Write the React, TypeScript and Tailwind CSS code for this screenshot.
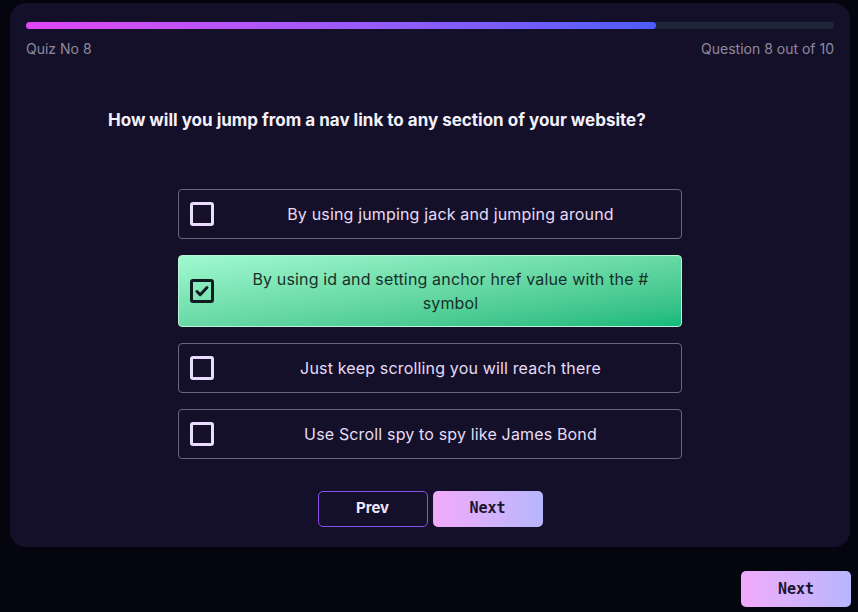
import React, { useState } from "react";

const options = [
  "By using jumping jack and jumping around",
  "By using id and setting anchor href value with the # symbol",
  "Just keep scrolling you will reach there",
  "Use Scroll spy to spy like James Bond",
];

const CheckBox: React.FC<{ checked: boolean }> = ({ checked }) => (
  <span
    className={`flex h-[24px] w-[24px] shrink-0 items-center justify-center rounded-[3px] border-[3px] ${
      checked ? "border-[#0f1d22]" : "border-[#eadcff]"
    }`}
  >
    {checked && (
      <svg viewBox="0 0 16 16" className="h-[16px] w-[16px]" fill="none">
        <path d="M3 8.5l3.2 3.2L13 4.5" stroke="#0f1d22" strokeWidth={3} strokeLinecap="round" strokeLinejoin="round" />
      </svg>
    )}
  </span>
);

export default function App() {
  const [selected, setSelected] = useState(1);

  return (
    <div className="min-h-[612px] w-[858px] bg-[#05050f] pt-[3px] font-['Inter',sans-serif]">
      <div className="ml-[10px] flex h-[544px] w-[840px] flex-col rounded-[16px] bg-[#151029] px-[16px] pt-[19px]">
        <div className="h-[7px] w-full rounded-full bg-[#1e2637]">
          <div className="h-full w-[78%] rounded-full bg-gradient-to-r from-[#e245f6] to-[#4c5cff]" />
        </div>
        <div className="mt-[9px] flex justify-between text-[14px] text-[#8e8a9c]">
          <span>Quiz No 8</span>
          <span>Question 8 out of 10</span>
        </div>
        <h2 className="mt-[49px] pl-[82px] text-[17px] font-bold text-[#f3f0fa]">
          How will you jump from a nav link to any section of your website?
        </h2>
        <div className="mt-[55px] flex flex-col items-center gap-[16px]">
          {options.map((o, i) => {
            const on = selected === i;
            return (
              <button
                key={i}
                onClick={() => setSelected(i)}
                className={`flex w-[504px] items-center rounded-[4px] border pl-[11px] pr-[4px] text-left ${
                  on
                    ? "min-h-[72px] border-[#b8f5d6] bg-gradient-to-br from-[#a0f9d0] to-[#10b97c] text-[#17302a]"
                    : "min-h-[50px] border-[#6b6480] bg-transparent text-[#e6dcf7]"
                }`}
              >
                <CheckBox checked={on} />
                <span className="flex-1 pl-[19px] pr-[9px] text-center text-[16px] leading-[24px] tracking-[0.01em]">{o}</span>
              </button>
            );
          })}
        </div>
        <div className="mt-[32px] flex justify-center gap-[5px]">
          <button className="h-[36px] w-[110px] rounded-[5px] border border-[#8a4fe6] text-[15px] font-bold text-[#efe6ff]">
            Prev
          </button>
          <button className="h-[36px] w-[110px] rounded-[5px] bg-gradient-to-r from-[#f1aafa] to-[#b6b6fd] font-['DejaVu_Sans_Mono',monospace] text-[15px] font-bold text-[#1b1530]">
            Next
          </button>
        </div>
      </div>
      <div className="mt-[24px] flex justify-end pr-[7px]">
        <button className="h-[36px] w-[110px] rounded-[5px] bg-gradient-to-r from-[#f1aafa] to-[#b6b6fd] font-['DejaVu_Sans_Mono',monospace] text-[15px] font-bold text-[#1b1530]">
          Next
        </button>
      </div>
    </div>
  );
}
